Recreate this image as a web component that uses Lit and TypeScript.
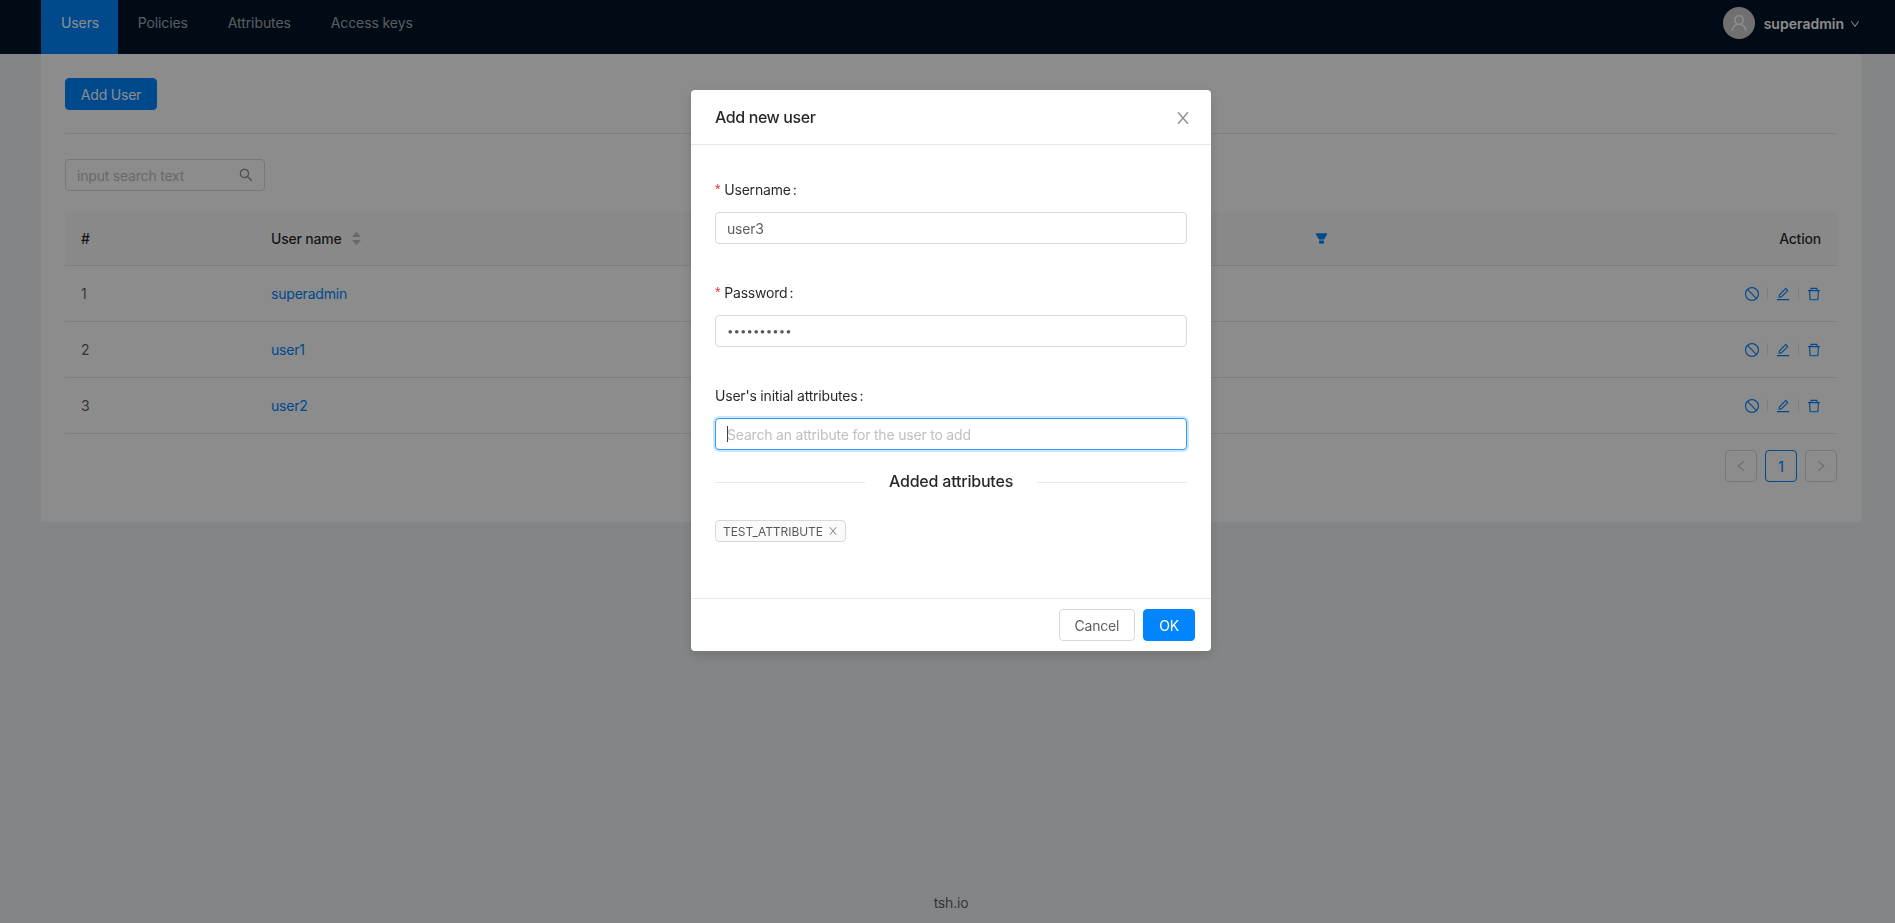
import { LitElement, html, css, svg } from "lit";
import { customElement } from "lit/decorators.js";

const P = {
  close: "M563.8 512l262.5-312.9c4.4-5.2.7-13.1-6.1-13.1h-79.8c-4.7 0-9.2 2.1-12.3 5.7L511.6 449.8 295.1 191.7c-3-3.6-7.5-5.7-12.3-5.7H203c-6.8 0-10.5 7.9-6.1 13.1L459.4 512 196.9 824.9A7.95 7.95 0 0 0 203 838h79.8c4.7 0 9.2-2.1 12.3-5.7l216.5-258.1 216.3 258.1c3 3.6 7.5 5.7 12.3 5.7h79.8c6.8 0 10.5-7.9 6.1-13.1L563.8 512z",
  search: "M909.6 854.5L649.9 594.8C690.2 542.7 712 479 712 412c0-80.2-31.3-155.4-87.9-212.1-56.6-56.7-132-87.9-212.1-87.9s-155.5 31.3-212.1 87.9C143.2 256.5 112 331.8 112 412c0 80.1 31.3 155.5 87.9 212.1C256.5 680.8 331.8 712 412 712c67 0 130.6-21.8 182.7-62l259.7 259.6a8.2 8.2 0 0 0 11.6 0l43.6-43.5a8.2 8.2 0 0 0 0-11.6zM570.4 570.4C528 612.7 471.8 636 412 636s-116-23.3-158.4-65.6C211.3 528 188 471.8 188 412s23.3-116.1 65.6-158.4C296 211.3 352.2 188 412 188s116.1 23.2 158.4 65.6S636 352.2 636 412s-23.3 116.1-65.6 158.4z",
  stop: "M512 64C264.6 64 64 264.6 64 512s200.6 448 448 448 448-200.6 448-448S759.4 64 512 64zm0 820c-205.4 0-372-166.6-372-372 0-89 31.3-170.8 83.5-234.8l523.3 523.3C682.8 852.7 601 884 512 884zm288.5-137.2L277.2 223.5C341.2 171.3 423 140 512 140c205.4 0 372 166.6 372 372 0 89-31.3 170.8-83.5 234.8z",
  edit: "M257.7 752c2 0 4-.2 6-.5L431.9 722c2-.4 3.9-1.3 5.3-2.8l423.9-423.9a9.96 9.96 0 0 0 0-14.1L694.9 114.9c-1.9-1.9-4.4-2.9-7.1-2.9s-5.2 1-7.1 2.9L256.8 538.8c-1.5 1.5-2.4 3.3-2.8 5.3l-29.5 168.2a33.5 33.5 0 0 0 9.4 29.8c6.6 6.4 14.9 9.9 23.8 9.9zm67.4-174.4L687.8 215l73.3 73.3-362.7 362.6-88.9 15.7 15.6-89zM880 836H144c-17.7 0-32 14.3-32 32v36c0 4.4 3.6 8 8 8h784c4.4 0 8-3.6 8-8v-36c0-17.7-14.3-32-32-32z",
  del: "M360 184h-8c4.4 0 8-3.6 8-8v8h304v-8c0 4.4 3.6 8 8 8h-8v72h72v-80c0-35.3-28.7-64-64-64H352c-35.3 0-64 28.7-64 64v80h72v-72zm504 72H160c-17.7 0-32 14.3-32 32v32c0 4.4 3.6 8 8 8h60.4l24.7 523c1.6 34.1 29.8 61 63.9 61h454c34.2 0 62.3-26.8 63.9-61l24.7-523H888c4.4 0 8-3.6 8-8v-32c0-17.7-14.3-32-32-32zM731.3 840H292.7l-24.2-512h487l-24.2 512z",
  down: "M884 256h-75c-5.1 0-9.9 2.5-12.9 6.6L512 654.2 227.9 262.6c-3-4.1-7.8-6.6-12.9-6.6h-75c-6.5 0-10.3 7.4-6.5 12.7l352.6 486.1c12.8 17.6 39 17.6 51.7 0l352.6-486.1c3.9-5.3.1-12.7-6.4-12.7z",
  left: "M724 218.3V141c0-6.7-7.7-10.4-12.9-6.3L260.3 486.8a31.86 31.86 0 0 0 0 50.3l450.8 352.1c5.3 4.1 12.9.4 12.9-6.3v-77.3c0-4.9-2.3-9.6-6.1-12.6l-360-281 360-281.1c3.8-3 6.1-7.7 6.1-12.6z",
  right: "M765.7 486.8L314.9 134.7A7.97 7.97 0 0 0 302 141v77.3c0 4.9 2.3 9.6 6.1 12.6l360 281.1-360 281.1c-3.9 3-6.1 7.7-6.1 12.6V883c0 6.7 7.7 10.4 12.9 6.3l450.8-352.1a31.96 31.96 0 0 0 0-50.4z",
  user: "M858.5 763.6a374 374 0 0 0-80.6-119.5 375.63 375.63 0 0 0-119.5-80.6c-.4-.2-.8-.3-1.2-.5C719.5 518 760 444.7 760 362c0-137-111-248-248-248S264 225 264 362c0 82.7 40.5 156 102.8 201.1-.4.2-.8.3-1.2.5-44.8 18.9-85 46-119.5 80.6a375.63 375.63 0 0 0-80.6 119.5A371.7 371.7 0 0 0 136 901.8a8 8 0 0 0 8 8.2h60c4.4 0 7.9-3.5 8-7.8 2-77.2 33-149.5 87.8-204.3 56.7-56.7 132-87.9 212.2-87.9s155.5 31.2 212.2 87.9C779 752.7 810 825 812 902.2c.1 4.4 3.6 7.8 8 7.8h60a8 8 0 0 0 8-8.2c-1-47.8-10.9-94.3-29.5-138.2zM512 534c-45.9 0-89.1-17.9-121.6-50.4S340 407.9 340 362c0-45.9 17.9-89.1 50.4-121.6S466.1 190 512 190s89.1 17.9 121.6 50.4S684 316.1 684 362c0 45.9-17.9 89.1-50.4 121.6S557.9 534 512 534z",
  filter: "M349 838c0 17.7 14.2 32 31.8 32h262.4c17.6 0 31.8-14.3 31.8-32V642H349v196zm531.1-684H143.9c-24.5 0-39.8 26.7-27.5 48l221.3 376h348.8l221.3-376c12.1-21.3-3.2-48-27.7-48z",
  caretUp: "M858.9 689L530.5 308.2c-9.4-10.9-27.5-10.9-37 0L165.1 689c-12.2 14.2-1.2 35 18.5 35h656.8c19.7 0 30.7-20.8 18.5-35z",
  caretDown: "M840.4 300H183.6c-19.7 0-30.7 20.8-18.5 35l328.4 380.8c9.4 10.9 27.5 10.9 37 0L858.9 335c12.2-14.2 1.2-35-18.5-35z",
};

const icon = (d: string, size: number) => html`<svg class="ico" viewBox="64 64 896 896" width=${size} height=${size} fill="currentColor" aria-hidden="true">${svg`<path d=${d}></path>`}</svg>`;

const USERS = ["superadmin", "user1", "user2"];

@customElement("app-root")
export class AppRoot extends LitElement {
  static styles = css`
    :host {
      display: flex;
      flex-direction: column;
      min-height: 100vh;
      background: #f0f2f5;
      font-family: Inter, "Noto Sans", sans-serif;
      font-size: 14px;
      letter-spacing: -0.2px;
      color: rgba(0, 0, 0, 0.65);
    }
    * { box-sizing: border-box; }
    .ico { display: block; flex: none; }
    .header {
      height: 54px;
      flex: none;
      background: #001529;
      padding: 0 35px 0 41px;
      display: flex;
      justify-content: space-between;
    }
    .nav { display: flex; letter-spacing: -0.1px; }
    .nav-item {
      height: 54px;
      padding: 0 20px;
      line-height: 45px;
      color: rgba(255, 255, 255, 0.65);
    }
    .nav-item.active { background: #0085ff; color: #fff; padding-right: 18.5px; }
    .account {
      display: flex;
      align-items: center;
      height: 46px;
      color: #fff;
      font-weight: 600;
      letter-spacing: 0;
    }
    .avatar {
      width: 32px;
      height: 32px;
      border-radius: 50%;
      background: #ccc;
      color: #fff;
      display: flex;
      align-items: center;
      justify-content: center;
      margin-right: 9px;
    }
    .account .chev { margin-left: 6px; margin-top: 1px; }
    .content {
      margin: 0 34px 0 41px;
      background: #fff;
      padding: 24px 24px 40px;
    }
    .btn {
      display: inline-flex;
      align-items: center;
      justify-content: center;
      height: 32px;
      border-radius: 4px;
      border: 1px solid #d9d9d9;
      background: #fff;
      padding: 0 15px;
      white-space: nowrap;
    }
    .btn.primary { background: #0085ff; border-color: #0085ff; color: #fff; }
    .add { width: 92px; }
    .rule { height: 1px; background: #e8e8e8; margin: 23px 0 25px; }
    .search {
      width: 200px;
      height: 32px;
      border: 1px solid #d9d9d9;
      border-radius: 4px;
      display: flex;
      align-items: center;
      padding: 0 11px;
      color: rgba(0, 0, 0, 0.45);
      margin-bottom: 21px;
    }
    .search span { flex: 1; color: #bfbfbf; }
    .tr {
      display: grid;
      grid-template-columns: 190px 1fr 502px;
      border-bottom: 1px solid #e8e8e8;
      height: 56px;
      align-items: center;
    }
    .tr.head {
      height: 54px;
      background: #fafafa;
      color: rgba(0, 0, 0, 0.85);
      font-weight: 500;
    }
    .cell { padding: 0 16px; display: flex; align-items: center; min-width: 0; }
    .cell.end { justify-content: flex-end; }
    .cell.wide { padding-right: 7px; }
    .funnel { margin-left: auto; color: #0085ff; }
    .sorter { margin-left: 9px; color: #bfbfbf; display: flex; flex-direction: column; }
    .sorter .ico + .ico { margin-top: -3px; }
    a { color: #0085ff; text-decoration: none; }
    .actions { color: #0085ff; }
    .sep { width: 1px; height: 13px; background: #e8e8e8; margin: 0 8px; }
    .pager { display: flex; justify-content: flex-end; gap: 8px; margin-top: 16px; }
    .page {
      width: 32px;
      height: 32px;
      border: 1px solid #d9d9d9;
      border-radius: 4px;
      display: flex;
      align-items: center;
      justify-content: center;
      color: #bfbfbf;
    }
    .page.active { border-color: #0085ff; color: #0085ff; }
    .footer {
      margin-top: auto;
      text-align: center;
      padding: 0 0 10px 7px;
      line-height: 21px;
    }
    .mask {
      position: fixed;
      inset: 0;
      background: rgba(0, 0, 0, 0.45);
      display: flex;
      justify-content: center;
      align-items: flex-start;
      padding: 90px 0 0 7px;
    }
    .modal {
      width: 520px;
      background: #fff;
      border-radius: 4px;
      box-shadow: 0 4px 12px rgba(0, 0, 0, 0.15);
    }
    .m-head {
      height: 55px;
      padding: 0 24px;
      border-bottom: 1px solid #e8e8e8;
      display: flex;
      align-items: center;
      justify-content: space-between;
      font-size: 16px;
      font-weight: 500;
      letter-spacing: -0.4px;
      color: rgba(0, 0, 0, 0.85);
    }
    .m-head .x { color: rgba(0, 0, 0, 0.45); margin-right: -4px; margin-top: 1px; }
    .m-body { padding: 28px 24px 56px; }
    .label {
      height: 32px;
      display: flex;
      align-items: center;
      color: rgba(0, 0, 0, 0.85);
      margin-bottom: 7px;
    }
    .req { color: #f5222d; margin-right: 4px; font-size: 14px; font-family: "Liberation Sans", sans-serif; }
    .colon { margin-left: 2px; }
    .item { margin-bottom: 32px; }
    .item.last { margin-bottom: 19px; }
    .field { position: relative; }
    input {
      display: block;
      width: 100%;
      height: 32px;
      border: 1px solid #d9d9d9;
      border-radius: 4px;
      padding: 0 11px;
      font: inherit;
      letter-spacing: inherit;
      color: rgba(0, 0, 0, 0.65);
      outline: none;
      background: #fff;
    }
    input[type="password"] { font-size: 11.5px; letter-spacing: 0; }
    input::placeholder { color: #bfbfbf; opacity: 1; }
    input.focus { border-color: #2b9dff; box-shadow: 0 0 0 2px rgba(0, 133, 255, 0.2); }
    .caret {
      position: absolute;
      left: 12px;
      top: 8px;
      width: 1px;
      height: 16px;
      background: rgba(0, 0, 0, 0.75);
    }
    .divider {
      display: flex;
      align-items: center;
      gap: 24px;
      font-size: 16px;
      font-weight: 500;
      color: rgba(0, 0, 0, 0.85);
      line-height: 24px;
      margin-bottom: 27px;
    }
    .divider i { flex: 1; height: 1px; background: #e8e8e8; margin-top: 2px; }
    .tag {
      display: inline-flex;
      align-items: center;
      height: 22px;
      padding: 0 7px;
      border: 1px solid #d9d9d9;
      border-radius: 4px;
      background: #fafafa;
      font-size: 12px;
      letter-spacing: -0.05px;
      vertical-align: top;
    }
    .tag .ico { margin-left: 5px; color: rgba(0, 0, 0, 0.45); }
    .tags { height: 22px; }
    .m-foot {
      border-top: 1px solid #e8e8e8;
      padding: 10px 16px;
      display: flex;
      justify-content: flex-end;
      gap: 8px;
    }
  `;

  render() {
    return html`
      <header class="header">
        <nav class="nav">
          <div class="nav-item active">Users</div>
          <div class="nav-item">Policies</div>
          <div class="nav-item">Attributes</div>
          <div class="nav-item">Access keys</div>
        </nav>
        <div class="account">
          <span class="avatar">${icon(P.user, 18)}</span>
          <span>superadmin</span>
          <span class="chev">${icon(P.down, 10)}</span>
        </div>
      </header>

      <main class="content">
        <div class="btn primary add">Add User</div>
        <div class="rule"></div>
        <div class="search"><span>input search text</span>${icon(P.search, 14)}</div>
        <div class="tr head">
          <div class="cell">#</div>
          <div class="cell wide">User name
            <span class="sorter">${icon(P.caretUp, 11)}${icon(P.caretDown, 11)}</span>
            <span class="funnel">${icon(P.filter, 13)}</span>
          </div>
          <div class="cell end">Action</div>
        </div>
        ${USERS.map(
          (u, i) => html`
            <div class="tr">
              <div class="cell">${i + 1}</div>
              <div class="cell"><a>${u}</a></div>
              <div class="cell end actions">
                ${icon(P.stop, 14)}<span class="sep"></span>${icon(P.edit, 14)}<span class="sep"></span>${icon(P.del, 14)}
              </div>
            </div>
          `
        )}
        <div class="pager">
          <div class="page">${icon(P.left, 12)}</div>
          <div class="page active">1</div>
          <div class="page">${icon(P.right, 12)}</div>
        </div>
      </main>

      <footer class="footer">tsh.io</footer>

      <div class="mask">
        <section class="modal">
          <div class="m-head">
            <span>Add new user</span>
            <span class="x">${icon(P.close, 16)}</span>
          </div>
          <div class="m-body">
            <div class="item">
              <div class="label"><span class="req">*</span>Username<span class="colon">:</span></div>
              <input .value=${"user3"} />
            </div>
            <div class="item">
              <div class="label"><span class="req">*</span>Password<span class="colon">:</span></div>
              <input type="password" .value=${"••••••••••"} />
            </div>
            <div class="item last">
              <div class="label">User's initial attributes<span class="colon">:</span></div>
              <div class="field">
                <input class="focus" placeholder="Search an attribute for the user to add" />
                <span class="caret"></span>
              </div>
            </div>
            <div class="divider"><i></i><span>Added attributes</span><i></i></div>
            <div class="tags">
              <span class="tag">TEST_ATTRIBUTE${icon(P.close, 10)}</span>
            </div>
          </div>
          <div class="m-foot">
            <div class="btn">Cancel</div>
            <div class="btn primary">OK</div>
          </div>
        </section>
      </div>
    `;
  }
}
